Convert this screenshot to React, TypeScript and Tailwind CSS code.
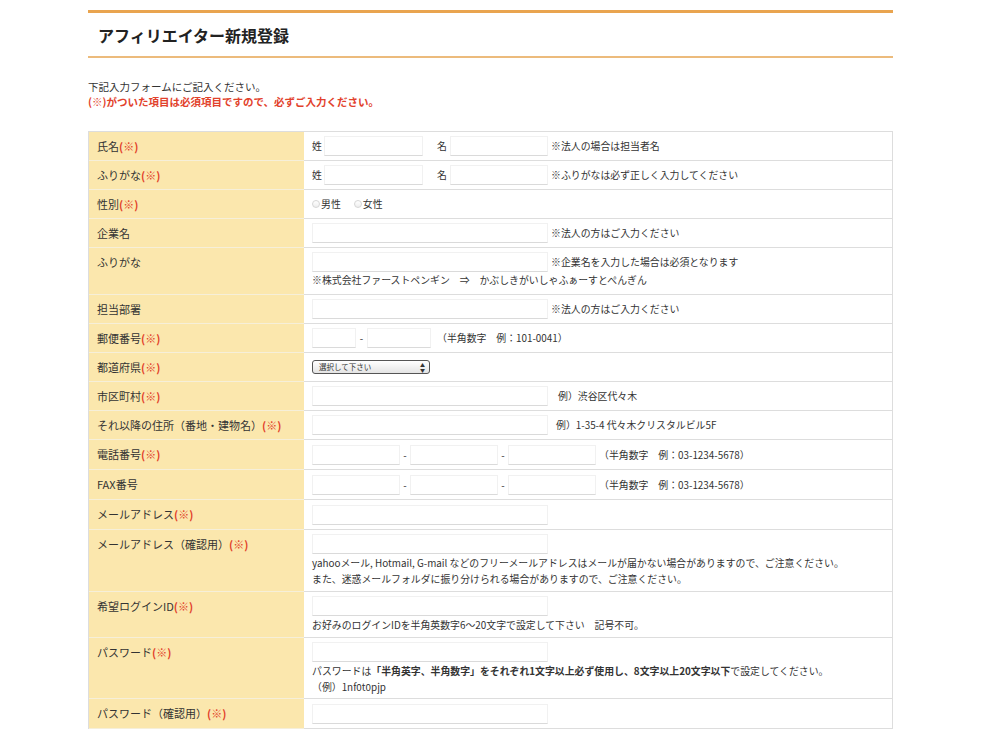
import React from "react";

const Req = () => <span className="font-bold text-[#e2412b]">(※)</span>;

const Input = ({ w }: { w: string }) => (
	<input type="text" className={`h-5 ${w} shrink-0 border border-[#f1f1f1] border-b-[#dadada] bg-white outline-none`} />
);

interface RowProps {
	label: string;
	req?: boolean;
	children: React.ReactNode;
	cellClass?: string;
}

const Row = ({ label, req, children, cellClass = "py-1" }: RowProps) => (
	<div className="grid grid-cols-[215px_1fr]">
		<div className="bg-[#fbe7ad] border-b border-[#f6efd9] pl-2 pt-[6px] pb-[5px] text-[11px] leading-4 text-[#333]">
			{label}
			{req && <Req />}
		</div>
		<div className={`border-b border-[#dddddd] pl-2 pr-2 text-[9.9px] leading-4 text-[#333] ${cellClass}`}>{children}</div>
	</div>
);

const Radio = ({ label }: { label: string }) => (
	<span className="flex items-center gap-[1px]">
		<span className="inline-block h-[8px] w-[8px] rounded-full border border-[#d6d6d6] bg-gradient-to-b from-white to-[#eee]"></span>
		{label}
	</span>
);

export default function App() {
	return (
		<div className="min-h-[733px] bg-white pt-[10px] font-['Noto_Sans_CJK_JP','Noto_Sans',sans-serif] text-[#333]">
			<div className="ml-[88px] w-[805px]">
				{/* タイトル */}
				<div className="flex h-[48px] items-center border-t-[3px] border-b-2 border-t-[#e9a44f] border-b-[#ecbb7c] pl-[10px] text-[16px] font-bold text-[#222]">
					アフィリエイター新規登録
				</div>

				<div className="mt-[21px] text-[10.5px] leading-[15px]">
					<p>下記入力フォームにご記入ください。</p>
					<p className="font-bold text-[#e2412b]">(※)がついた項目は必須項目ですので、必ずご入力ください。</p>
				</div>

				{/* フォーム */}
				<div className="mt-[22px] border border-b-0 border-[#dddddd]">
					<Row label="氏名" req>
						<div className="flex items-center">
							<span className="w-[12px]">姓</span>
							<Input w="w-[99px]" />
							<span className="ml-[14px] w-[13px]">名</span>
							<Input w="w-[98px]" />
							<span className="ml-[3px]">※法人の場合は担当者名</span>
						</div>
					</Row>
					<Row label="ふりがな" req>
						<div className="flex items-center">
							<span className="w-[12px]">姓</span>
							<Input w="w-[99px]" />
							<span className="ml-[14px] w-[13px]">名</span>
							<Input w="w-[98px]" />
							<span className="ml-[3px]">※ふりがなは必ず正しく入力してください</span>
						</div>
					</Row>
					<Row label="性別" req cellClass="py-[6px]">
						<div className="flex h-4 items-center gap-[13px]">
							<Radio label="男性" />
							<Radio label="女性" />
						</div>
					</Row>
					<Row label="企業名">
						<div className="flex items-center">
							<Input w="w-[236px]" />
							<span className="ml-[3px]">※法人の方はご入力ください</span>
						</div>
					</Row>
					<Row label="ふりがな" cellClass="pt-1 pb-[6px]">
						<div className="flex items-center">
							<Input w="w-[236px]" />
							<span className="ml-[3px]">※企業名を入力した場合は必須となります</span>
						</div>
						<p>※株式会社ファーストペンギン　⇒　かぶしきがいしゃふぁーすとぺんぎん</p>
					</Row>
					<Row label="担当部署">
						<div className="flex items-center">
							<Input w="w-[236px]" />
							<span className="ml-[3px]">※法人の方はご入力ください</span>
						</div>
					</Row>
					<Row label="郵便番号" req>
						<div className="flex items-center">
							<Input w="w-[44px]" />
							<span className="w-[11px] text-center">-</span>
							<Input w="w-[64px]" />
							<span className="ml-[6px]">（半角数字　例：101-0041）</span>
						</div>
					</Row>
					<Row label="都道府県" req cellClass="py-[7px]">
						<div className="flex h-[14px] w-[118px] items-center justify-between rounded-[3px] border border-[#555] bg-gradient-to-b from-white to-[#e4e4e4] pl-[6px] pr-[4px] text-[7.5px] leading-none">
							<span>選択して下さい</span>
							<span className="flex flex-col text-[5px] leading-[5px]">
								<span>▲</span>
								<span>▼</span>
							</span>
						</div>
					</Row>
					<Row label="市区町村" req>
						<div className="flex items-center">
							<Input w="w-[236px]" />
							<span className="ml-[10px]">例）渋谷区代々木</span>
						</div>
					</Row>
					<Row label="それ以降の住所（番地・建物名）" req>
						<div className="flex items-center">
							<Input w="w-[236px]" />
							<span className="ml-[8px]">例）1-35-4 代々木クリスタルビル5F</span>
						</div>
					</Row>
					<Row label="電話番号" req cellClass="pt-[5px] pb-1">
						<div className="flex items-center">
							<Input w="w-[88px]" />
							<span className="w-[10px] text-center">-</span>
							<Input w="w-[88px]" />
							<span className="w-[10px] text-center">-</span>
							<Input w="w-[88px]" />
							<span className="ml-[3px]">（半角数字　例：03-1234-5678）</span>
						</div>
					</Row>
					<Row label="FAX番号" cellClass="pt-[5px] pb-1">
						<div className="flex items-center">
							<Input w="w-[88px]" />
							<span className="w-[10px] text-center">-</span>
							<Input w="w-[88px]" />
							<span className="w-[10px] text-center">-</span>
							<Input w="w-[88px]" />
							<span className="ml-[3px]">（半角数字　例：03-1234-5678）</span>
						</div>
					</Row>
					<Row label="メールアドレス" req cellClass="pt-[5px] pb-1">
						<Input w="w-[236px]" />
					</Row>
					<Row label="メールアドレス（確認用）" req cellClass="pt-1 pb-[4px]">
						<Input w="w-[236px]" />
						<p className="mt-[1px]">yahooメール, Hotmail, G-mail などのフリーメールアドレスはメールが届かない場合がありますので、ご注意ください。</p>
						<p>また、迷惑メールフォルダに振り分けられる場合がありますので、ご注意ください。</p>
					</Row>
					<Row label="希望ログインID" req cellClass="pt-1 pb-[4px]">
						<Input w="w-[236px]" />
						<p className="mt-[1px]">お好みのログインIDを半角英数字6〜20文字で設定して下さい　記号不可。</p>
					</Row>
					<Row label="パスワード" req cellClass="pt-1 pb-[3px]">
						<Input w="w-[236px]" />
						<p className="mt-[1px]">
							パスワードは<b>「半角英字、半角数字」をそれぞれ1文字以上必ず使用し、8文字以上20文字以下</b>で設定してください。
						</p>
						<p>（例）1nf0t0pjp</p>
					</Row>
					<Row label="パスワード（確認用）" req cellClass="pt-[5px] pb-1">
						<Input w="w-[236px]" />
					</Row>
				</div>
			</div>
		</div>
	);
}
